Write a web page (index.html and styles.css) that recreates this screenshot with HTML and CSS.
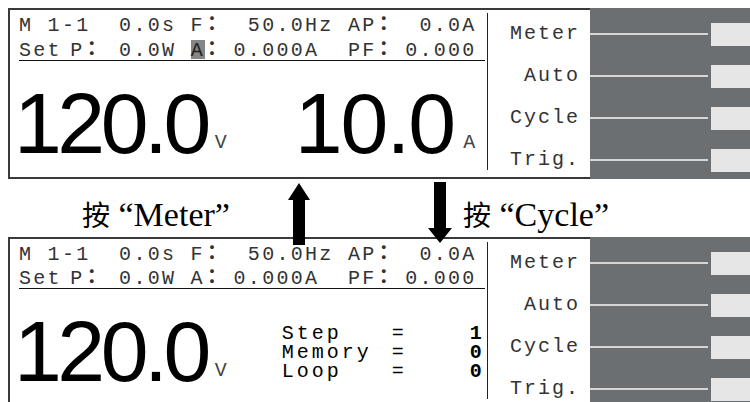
FILE: index.html
```html
<!DOCTYPE html>
<html lang="zh">
<head>
    <meta charset="UTF-8">
    <title>Meter / Cycle</title>
    <link rel="stylesheet" href="styles.css">
</head>
<body>
    <div class="page">
        <!-- meter screen -->
        <section class="panel">
            <div class="lcd">
                <div class="main">
                    <div class="row1">M 1-1  0.0s F<span class="fc">：</span>  50.0Hz AP<span class="fc">：</span>  0.0A</div>
                    <div class="row2"><span class="tight">Set P</span><span class="fc wide">：</span> 0.0W <span class="hl">A</span><span class="fc">：</span> 0.000A  PF<span class="fc">：</span> 0.000</div>
                    <div class="readout">
                        <div class="val">120.0<span class="unit">V</span></div>
                        <div class="val val2">10.0<span class="unit unit2">A</span></div>
                    </div>
                </div>
                <ul class="menu">
                    <li>Meter</li>
                    <li>Auto</li>
                    <li>Cycle</li>
                    <li>Trig.</li>
                </ul>
            </div>
            <div class="keys">
                <div class="key"><i></i><b></b></div>
                <div class="key"><i></i><b></b></div>
                <div class="key"><i></i><b></b></div>
                <div class="key"><i></i><b></b></div>
            </div>
        </section>

        <div class="captions">
            <div class="cap cap1"><span class="zh">按</span> “Meter”</div>
            <div class="cap"><span class="zh">按</span> “Cycle”</div>
        </div>

        <!-- cycle screen -->
        <section class="panel">
            <div class="lcd">
                <div class="main">
                    <div class="row1">M 1-1  0.0s F<span class="fc">：</span>  50.0Hz AP<span class="fc">：</span>  0.0A</div>
                    <div class="row2"><span class="tight">Set P</span><span class="fc wide">：</span> 0.0W A<span class="fc">：</span> 0.000A  PF<span class="fc">：</span> 0.000</div>
                    <div class="readout">
                        <div class="val">120.0<span class="unit">V</span></div>
                        <div class="stats">
                            <span>Step</span><span>=</span><b>1</b>
                            <span>Memory</span><span>=</span><b>0</b>
                            <span>Loop</span><span>=</span><b>0</b>
                        </div>
                    </div>
                </div>
                <ul class="menu">
                    <li>Meter</li>
                    <li>Auto</li>
                    <li>Cycle</li>
                    <li>Trig.</li>
                </ul>
            </div>
            <div class="keys">
                <div class="key"><i></i><b></b></div>
                <div class="key"><i></i><b></b></div>
                <div class="key"><i></i><b></b></div>
                <div class="key"><i></i><b></b></div>
            </div>
        </section>

        <svg class="arrow arrow-up" width="22" height="62" viewBox="0 0 22 62">
            <polygon points="11,0 22,17 17,17 17,62 5,62 5,17 0,17" fill="#000"/>
        </svg>
        <svg class="arrow arrow-down" width="24" height="61" viewBox="0 0 24 61">
            <polygon points="6,0 18,0 18,46 24,46 12,61 0,46 6,46" fill="#000"/>
        </svg>
    </div>
</body>
</html>
```

FILE: styles.css
```css
body {
    margin: 0;
    width: 750px;
    height: 402px;
    overflow: hidden;
    background: #fff;
}

.page {
    position: relative;
    padding: 8px 0 0 8px;
}

.panel {
    display: flex;
    height: 171px;
}

.lcd {
    display: flex;
    width: 580px;
    background: #fff;
    border: 2px solid #3a3a3a;
    border-right: none;
    font-family: "Liberation Mono", "Noto Sans CJK TC", monospace;
    font-size: 20px;
    letter-spacing: 2.3px;
    color: #333;
}

.main {
    box-sizing: border-box;
    width: 478px;
    margin: 3px 0 7px;
    padding-left: 9px;
    border-right: 1px solid #222;
}

.row1 {
    white-space: pre;
    line-height: 25px;
}

.row2 {
    white-space: pre;
    line-height: 19px;
    padding-top: 2px;
    margin-right: 2px;
    border-bottom: 1px solid #111;
}

.fc {
    display: inline-flex;
    justify-content: center;
    width: 14.3px;
    line-height: 14px;
    letter-spacing: 0;
    font-family: "Noto Sans CJK TC", sans-serif;
    font-weight: bold;
}

.fc.wide {
    margin-right: 6px;
}

.tight {
    word-spacing: -6px;
}

.hl {
    display: inline-block;
    background: #858585;
    line-height: 16px;
    padding-top: 3px;
    color: #222;
}

.readout {
    display: flex;
    align-items: flex-start;
    margin-top: 19px;
}

.val {
    font-family: "Liberation Sans", Arial, sans-serif;
    font-size: 86px;
    line-height: 86px;
    letter-spacing: -4.5px;
    white-space: nowrap;
    color: #000;
    margin-left: -5px;
}

.val2 {
    margin-left: 68px;
    letter-spacing: -2px;
}

.unit {
    font-family: "Liberation Mono", monospace;
    font-size: 20px;
    line-height: 20px;
    letter-spacing: 0;
    vertical-align: 5px;
    margin-left: 8px;
    color: #444;
}

.unit2 {
    margin-left: 9px;
}

.stats {
    display: grid;
    grid-template-columns: 110px 12px 78px;
    margin: 16px 0 0 55px;
    line-height: 19px;
    letter-spacing: 3px;
    color: #000;
}

.stats b {
    text-align: right;
    letter-spacing: 0;
}

.menu {
    list-style: none;
    margin: 0;
    padding: 3px 12px 0 0;
    flex: 1;
}

.menu li {
    height: 42px;
    line-height: 42px;
    text-align: right;
    letter-spacing: 2px;
    margin-right: -2px;
}

.keys {
    flex-shrink: 0;
    width: 160px;
    padding-top: 5px;
    background: #6b6f71;
}

.key {
    display: flex;
    align-items: center;
    height: 42px;
}

.key i {
    flex: 1;
    height: 2px;
    background: #d6d6d6;
    margin-right: 3px;
}

.key b {
    width: 39px;
    height: 23px;
    background: #e6e6e6;
}

.captions {
    display: flex;
    align-items: flex-end;
    height: 52px;
    padding: 0 0 6px 74px;
}

.cap {
    font-family: "Liberation Serif", "Noto Sans CJK SC", serif;
    font-size: 34px;
    line-height: 32px;
    color: #000;
    white-space: nowrap;
}

.cap1 {
    width: 381px;
}

.zh {
    font-family: "Noto Sans CJK SC", sans-serif;
    font-size: 28px;
}

.arrow {
    position: absolute;
    z-index: 5;
}

.arrow-up {
    left: 288px;
    top: 183px;
}

.arrow-down {
    left: 428px;
    top: 182px;
}
```
